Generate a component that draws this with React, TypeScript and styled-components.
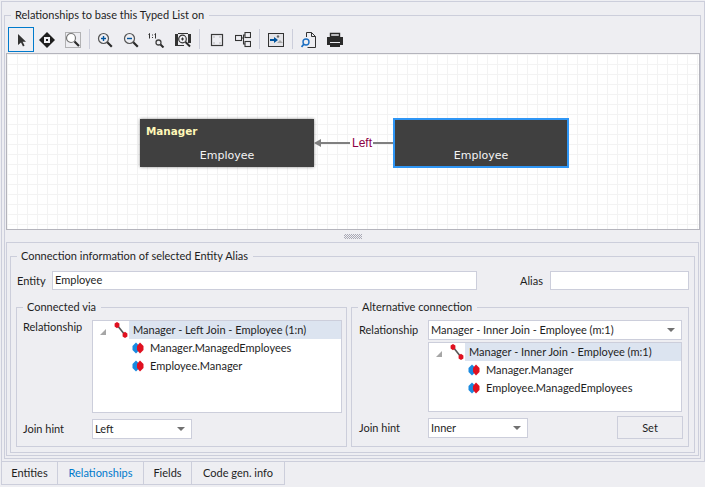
import React from "react";
import styled, { createGlobalStyle } from "styled-components";

const GlobalStyle = createGlobalStyle`
  html, body {
    margin: 0;
    padding: 0;
    background: #eeeef2;
  }
  * { box-sizing: border-box; }
`;

const line = "#ccceDB";

const Screen = styled.div`
  width: 705px;
  height: 487px;
  overflow: hidden;
  background: #eeeef2;
  font-family: Lato, "Liberation Sans", sans-serif;
  font-size: 11px;
  line-height: 14px;
  color: #1e1e1e;
  display: flex;
  flex-direction: column;
`;

const TabPage = styled.div`
  height: 461px;
  margin: 1px 0 0 1px;
  padding: 13px 3px 3px 2px;
  border: 1px solid ${line};
  display: flex;
  flex-direction: column;
  flex: none;
`;

const Group = styled.div<{ $pad: string; $height?: number; $width?: number }>`
  position: relative;
  border: 1px solid ${line};
  padding: ${(p) => p.$pad};
  ${(p) => (p.$height ? `height: ${p.$height}px;` : "")}
  ${(p) => (p.$width ? `width: ${p.$width}px;` : "")}
`;

const MainGroup = styled(Group)`
  flex: 1;
  display: flex;
  flex-direction: column;
`;

const Legend = styled.span`
  position: absolute;
  left: 6px;
  top: -9px;
  padding: 0 5px 0 4px;
  line-height: 16px;
  background: #eeeef2;
  white-space: nowrap;
`;

const Toolbar = styled.div`
  height: 26px;
  margin-left: 3px;
  display: flex;
  align-items: flex-start;
  flex: none;
`;

const ToolButton = styled.div<{ $active?: boolean }>`
  width: 26px;
  height: 25px;
  display: flex;
  align-items: center;
  justify-content: center;
  border: 1px solid ${(p) => (p.$active ? "#007acc" : "transparent")};
`;

const ToolSep = styled.div<{ $after?: number }>`
  width: 1px;
  height: 20px;
  margin: 2px ${(p) => p.$after ?? 3}px 0 3px;
  background: ${line};
`;

const Canvas = styled.div`
  height: 177px;
  margin-left: 1px;
  border: 1px solid #b4b4bc;
  background-color: #fff;
  background-image: linear-gradient(#f3f3f3 1px, transparent 1px),
    linear-gradient(90deg, #f3f3f3 1px, transparent 1px);
  background-size: 10px 10px;
  display: flex;
  align-items: flex-start;
  padding: 65px 0 0 133px;
  flex: none;
`;

const EntityNode = styled.div<{ $selected?: boolean }>`
  position: relative;
  width: ${(p) => (p.$selected ? 176 : 174)}px;
  height: ${(p) => (p.$selected ? 50 : 48)}px;
  margin-top: ${(p) => (p.$selected ? -1 : 0)}px;
  background: #404040;
  border: ${(p) => (p.$selected ? "2px solid #2f96f5" : "none")};
  box-shadow: ${(p) => (p.$selected ? "none" : "0 0 3px rgba(0,0,0,0.45)")};
  color: #f4f4f4;
  font-family: "DejaVu Sans", sans-serif;
  font-size: 11px;
  flex: none;
`;

const NodeTitle = styled.div`
  position: absolute;
  left: 6px;
  top: 5px;
  font-weight: bold;
  font-size: 10.4px;
  color: #fff8b8;
`;

const NodeName = styled.div<{ $selected?: boolean }>`
  position: absolute;
  left: 0;
  right: 0;
  bottom: ${(p) => (p.$selected ? 3 : 4)}px;
  text-align: center;
`;

const Connector = styled.div`
  width: 79px;
  height: 48px;
  flex: none;
  display: flex;
  align-items: center;
`;

const ConnectorLine = styled.div<{ $width?: number }>`
  height: 2px;
  background: #808080;
  flex: ${(p) => (p.$width ? `none` : 1)};
  ${(p) => (p.$width ? `width: ${p.$width}px;` : "")}
`;

const ArrowHead = styled.div`
  width: 0;
  height: 0;
  border-top: 4px solid transparent;
  border-bottom: 4px solid transparent;
  border-right: 7px solid #808080;
  flex: none;
`;

const ConnectorLabel = styled.span`
  font-family: "Liberation Sans", sans-serif;
  font-size: 12px;
  color: #8b0045;
  background: #fff;
  padding: 0 1px;
  margin-left: 1px;
  flex: none;
`;

const Splitter = styled.div`
  height: 12px;
  display: flex;
  align-items: center;
  justify-content: center;
  flex: none;
`;

const Grip = styled.div`
  width: 18px;
  height: 5px;
  background-image: conic-gradient(#a8a8b4 25%, transparent 0 50%, #a8a8b4 0 75%, transparent 0);
  background-size: 2px 2px;
`;

const LowerPanel = styled.div`
  flex: 1;
  margin: 0 1px 1px 1px;
  border: 1px solid ${line};
  padding: 13px 3px 2px 3px;
  display: flex;
  flex-direction: column;
`;

const ConnectionGroup = styled(Group)`
  flex: 1;
  display: flex;
  flex-direction: column;
`;

const FieldRow = styled.div<{ $top?: number }>`
  display: flex;
  align-items: center;
  margin-top: ${(p) => p.$top ?? 0}px;
`;

const TopRow = styled(FieldRow)`
  align-items: flex-start;
`;

const Label = styled.span<{ $width: number }>`
  width: ${(p) => p.$width}px;
  flex: none;
  white-space: nowrap;
`;

const EntityLabel = styled(Label)`
  padding-left: 1px;
`;

const AliasLabel = styled(Label)`
  text-align: right;
  padding-right: 7px;
`;

const TextBox = styled.div<{ $width: number }>`
  width: ${(p) => p.$width}px;
  height: 19px;
  border: 1px solid ${line};
  background: #fff;
  padding: 0 2px;
  line-height: 16px;
  flex: none;
  white-space: nowrap;
`;

const Combo = styled(TextBox)`
  position: relative;
  height: 20px;
  line-height: 17px;
  &::after {
    content: "";
    position: absolute;
    right: 6px;
    top: 7px;
    border: 4px solid transparent;
    border-top: 4px solid #717171;
    border-bottom: 0;
  }
`;

const Columns = styled.div`
  display: flex;
  gap: 4px;
  margin-top: 17px;
`;

const TreeBox = styled.div<{ $height: number; $width: number }>`
  width: ${(p) => p.$width}px;
  height: ${(p) => p.$height}px;
  border: 1px solid ${line};
  background: #fff;
  flex: none;
`;

const TreeRoot = styled.div`
  height: 18px;
  display: flex;
  align-items: center;
`;

const Expander = styled.div`
  width: 0;
  height: 0;
  margin: 3px 8px 0 7px;
  border-bottom: 6px solid #a6a6a6;
  border-left: 6px solid transparent;
  flex: none;
`;

const TreeSelected = styled.div`
  flex: 1;
  height: 18px;
  line-height: 18px;
  padding-left: 4px;
  margin-left: 1px;
  background: #dce4f0;
  white-space: nowrap;
`;

const TreeChild = styled.div`
  height: 18px;
  padding-left: 39px;
  display: flex;
  align-items: center;
  gap: 6px;
  white-space: nowrap;
`;

const BottomRow = styled(FieldRow)`
  justify-content: space-between;
`;

const SetButton = styled.div`
  width: 66px;
  height: 23px;
  border: 1px solid ${line};
  text-align: center;
  line-height: 21px;
`;

const Tabs = styled.div`
  display: flex;
  padding-left: 1px;
`;

const Tab = styled.div<{ $width: number; $active?: boolean }>`
  width: ${(p) => p.$width}px;
  height: 23px;
  border-right: 1px solid ${line};
  border-bottom: 1px solid ${line};
  text-align: center;
  line-height: 22px;
  color: ${(p) => (p.$active ? "#007acc" : "#1e1e1e")};
  &:first-child {
    border-left: 1px solid ${line};
  }
`;

const Arrow = () => (
  <svg width="16" height="16" viewBox="0 0 16 16">
    <path d="M5 2v11l3-2.6 2 4 1.6-.8-2-3.8H13z" fill="#333" />
  </svg>
);

const Pan = () => (
  <svg width="16" height="16" viewBox="0 0 16 16">
    <path d="M8 0l4 4H4zM8 16l-4-4h8zM0 8l4-4v8zM16 8l-4 4V4z" fill="#1e1e1e" />
    <rect x="4" y="4" width="8" height="8" fill="#1e1e1e" />
    <rect x="5" y="5" width="6" height="6" fill="#eeeef2" />
    <rect x="7" y="7" width="2" height="2" fill="#1e1e1e" />
  </svg>
);

const Glass = ({ sign }: { sign?: "plus" | "minus" }) => (
  <svg width="16" height="16" viewBox="0 0 16 16" fill="none">
    <circle cx="6.5" cy="6.5" r="5" stroke="#555" strokeWidth="1.2" />
    <path d="M10.3 10.3l4.5 4.5" stroke="#2b2b2b" strokeWidth="2.2" />
    <path d="M4 6.5h5" stroke="#00539c" strokeWidth="1.4" />
    {sign === "plus" && <path d="M6.5 4v5" stroke="#00539c" strokeWidth="1.4" />}
  </svg>
);

const ZoomArea = () => (
  <svg width="16" height="16" viewBox="0 0 16 16" fill="none">
    <rect x="0.5" y="0.5" width="15" height="15" stroke="#777" strokeDasharray="1 1" />
    <circle cx="6" cy="6" r="4.5" fill="#fff" stroke="#777" strokeWidth="1.2" />
    <path d="M9.5 9.5l4.5 4.5" stroke="#2b2b2b" strokeWidth="2.2" />
  </svg>
);

const ZoomActual = () => (
  <svg width="18" height="16" viewBox="0 0 18 16" fill="none">
    <path d="M1.5 1.5v5M0.5 2.5l1-1M7.5 1.5v5M6.5 2.5l1-1" stroke="#333" strokeWidth="1" />
    <path d="M4.5 2.5v1M4.5 5v1" stroke="#333" strokeWidth="1" />
    <circle cx="10.5" cy="10.5" r="2.5" stroke="#444" strokeWidth="1.3" />
    <path d="M12.5 12.5l3 3" stroke="#2b2b2b" strokeWidth="2" />
  </svg>
);

const ZoomFit = () => (
  <svg width="16" height="16" viewBox="0 0 16 16" fill="none">
    <path d="M0 2h3v12H0zM13 2h3v9h-3z" fill="#333" />
    <path d="M3 1.5h10M3 13.5h6" stroke="#333" />
    <circle cx="7.5" cy="7" r="3.8" fill="#eeeef2" stroke="#333" strokeWidth="1.2" />
    <path d="M6 7h3M7.5 5.5v3" stroke="#333" />
    <path d="M10.5 10l4.5 4.5" stroke="#2b2b2b" strokeWidth="2" />
  </svg>
);

const FitPage = () => (
  <svg width="16" height="16" viewBox="0 0 16 16" fill="none">
    <rect x="2.5" y="2.5" width="11" height="11" stroke="#3a3a3a" strokeWidth="1.2" />
    <path d="M4.5 4.5h1v1h-1zM10.5 4.5h1v1h-1zM4.5 10.5h1v1h-1zM10.5 10.5h1v1h-1z" fill="#888" />
  </svg>
);

const LayoutIcon = () => (
  <svg width="16" height="16" viewBox="0 0 16 16" fill="none" stroke="#333" strokeWidth="1.1">
    <rect x="0.5" y="3.5" width="6" height="5" />
    <rect x="10" y="0.5" width="5.5" height="5" />
    <rect x="10" y="9.5" width="5.5" height="5" />
    <path d="M6.5 6H8.5V3H10M8.5 6v6H10" />
  </svg>
);

const ExportImage = () => (
  <svg width="16" height="16" viewBox="0 0 16 16" fill="none">
    <rect x="0.5" y="1.5" width="15" height="13" fill="#e4e4e8" stroke="#333" />
    <circle cx="10" cy="4.5" r="1.2" fill="#666" />
    <path d="M9 11l3-3 3 3" fill="#aaa" />
    <path d="M2 7h4V5l4 3-4 3V9H2z" fill="#00539c" />
  </svg>
);

const PrintPreview = () => (
  <svg width="16" height="16" viewBox="0 0 16 16" fill="none">
    <path d="M5.5 5V0.5h5l4 4v11h-8" stroke="#333" />
    <path d="M10.5 0.5v4h4" stroke="#333" />
    <circle cx="5" cy="10" r="3" fill="#eeeef2" stroke="#1b6ec2" strokeWidth="1.4" />
    <path d="M3 12l-2.5 3" stroke="#1b6ec2" strokeWidth="1.8" />
  </svg>
);

const Printer = () => (
  <svg width="16" height="16" viewBox="0 0 16 16">
    <path d="M3.5 1.5h9v3h-9z" fill="none" stroke="#2b2b2b" strokeWidth="1.4" />
    <path d="M0 5h16v8h-3v2H3v-2H0z" fill="#2b2b2b" />
    <path d="M3 10h10v1H3z" fill="#eeeef2" />
  </svg>
);

const RelationIcon = () => (
  <svg width="14" height="16" viewBox="0 0 14 16">
    <path d="M3 3l8 10" stroke="#555" strokeWidth="1.6" />
    <path d="M3 0l2.4 1.6v3L3 6.2 0.6 4.6v-3z" fill="#e01020" />
    <path d="M11 9.8l2.4 1.6v3L11 16l-2.4-1.6v-3z" fill="#e01020" />
  </svg>
);

const FieldIcon = () => (
  <svg width="12" height="12" viewBox="0 0 12 12">
    <path d="M4 0.5L7.5 4v4L4 11.5 0.5 8V4z" fill="#1a8ae0" />
    <path d="M8 0.5L11.5 4v4L8 11.5 5 8V4z" fill="#e01020" />
  </svg>
);

function Tree({ width, height, title, fields }: { width: number; height: number; title: string; fields: string[] }) {
  return (
    <TreeBox $width={width} $height={height}>
      <TreeRoot>
        <Expander />
        <RelationIcon />
        <TreeSelected>{title}</TreeSelected>
      </TreeRoot>
      {fields.map((field) => (
        <TreeChild key={field}>
          <FieldIcon />
          {field}
        </TreeChild>
      ))}
    </TreeBox>
  );
}

export default function App() {
  return (
    <Screen>
      <GlobalStyle />
      <TabPage>
        <MainGroup $pad="11px 0 1px 0">
          <Legend>Relationships to base this Typed List on</Legend>
          <Toolbar>
            <ToolButton $active><Arrow /></ToolButton>
            <ToolButton><Pan /></ToolButton>
            <ToolButton><ZoomArea /></ToolButton>
            <ToolSep $after={2} />
            <ToolButton><Glass sign="plus" /></ToolButton>
            <ToolButton><Glass sign="minus" /></ToolButton>
            <ToolButton><ZoomActual /></ToolButton>
            <ToolButton><ZoomFit /></ToolButton>
            <ToolSep $after={4} />
            <ToolButton><FitPage /></ToolButton>
            <ToolButton><LayoutIcon /></ToolButton>
            <ToolSep />
            <ToolButton><ExportImage /></ToolButton>
            <ToolSep />
            <ToolButton><PrintPreview /></ToolButton>
            <ToolButton><Printer /></ToolButton>
          </Toolbar>
          <Canvas>
            <EntityNode>
              <NodeTitle>Manager</NodeTitle>
              <NodeName>Employee</NodeName>
            </EntityNode>
            <Connector>
              <ArrowHead />
              <ConnectorLine />
              <ConnectorLabel>Left</ConnectorLabel>
              <ConnectorLine $width={20} />
            </Connector>
            <EntityNode $selected>
              <NodeName $selected>Employee</NodeName>
            </EntityNode>
          </Canvas>
          <Splitter><Grip /></Splitter>
          <LowerPanel>
            <ConnectionGroup $pad="14px 5px 5px 5px">
              <Legend>Connection information of selected Entity Alias</Legend>
              <FieldRow>
                <EntityLabel $width={36}>Entity</EntityLabel>
                <TextBox $width={425}>Employee</TextBox>
                <AliasLabel $width={73}>Alias</AliasLabel>
                <TextBox $width={139} />
              </FieldRow>
              <Columns>
                <Group $pad="12px 6px 5px 6px" $height={140} $width={331}>
                  <Legend>Connected via</Legend>
                  <TopRow>
                    <Label $width={69}>Relationship</Label>
                    <Tree width={250} height={93} title="Manager - Left Join - Employee (1:n)" fields={["Manager.ManagedEmployees", "Employee.Manager"]} />
                  </TopRow>
                  <FieldRow $top={6}>
                    <Label $width={69}>Join hint</Label>
                    <Combo $width={100}>Left</Combo>
                  </FieldRow>
                </Group>
                <Group $pad="12px 5px 5px 7px" $height={140} $width={338}>
                  <Legend>Alternative connection</Legend>
                  <FieldRow>
                    <Label $width={69}>Relationship</Label>
                    <Combo $width={254}>Manager - Inner Join - Employee (m:1)</Combo>
                  </FieldRow>
                  <FieldRow $top={2}>
                    <Label $width={69} />
                    <Tree width={254} height={70} title="Manager - Inner Join - Employee (m:1)" fields={["Manager.Manager", "Employee.ManagedEmployees"]} />
                  </FieldRow>
                  <BottomRow $top={4}>
                    <FieldRow>
                      <Label $width={69}>Join hint</Label>
                      <Combo $width={100}>Inner</Combo>
                    </FieldRow>
                    <SetButton>Set</SetButton>
                  </BottomRow>
                </Group>
              </Columns>
            </ConnectionGroup>
          </LowerPanel>
        </MainGroup>
      </TabPage>
      <Tabs>
        <Tab $width={57}>Entities</Tab>
        <Tab $width={86} $active>Relationships</Tab>
        <Tab $width={48}>Fields</Tab>
        <Tab $width={93}>Code gen. info</Tab>
      </Tabs>
    </Screen>
  );
}
